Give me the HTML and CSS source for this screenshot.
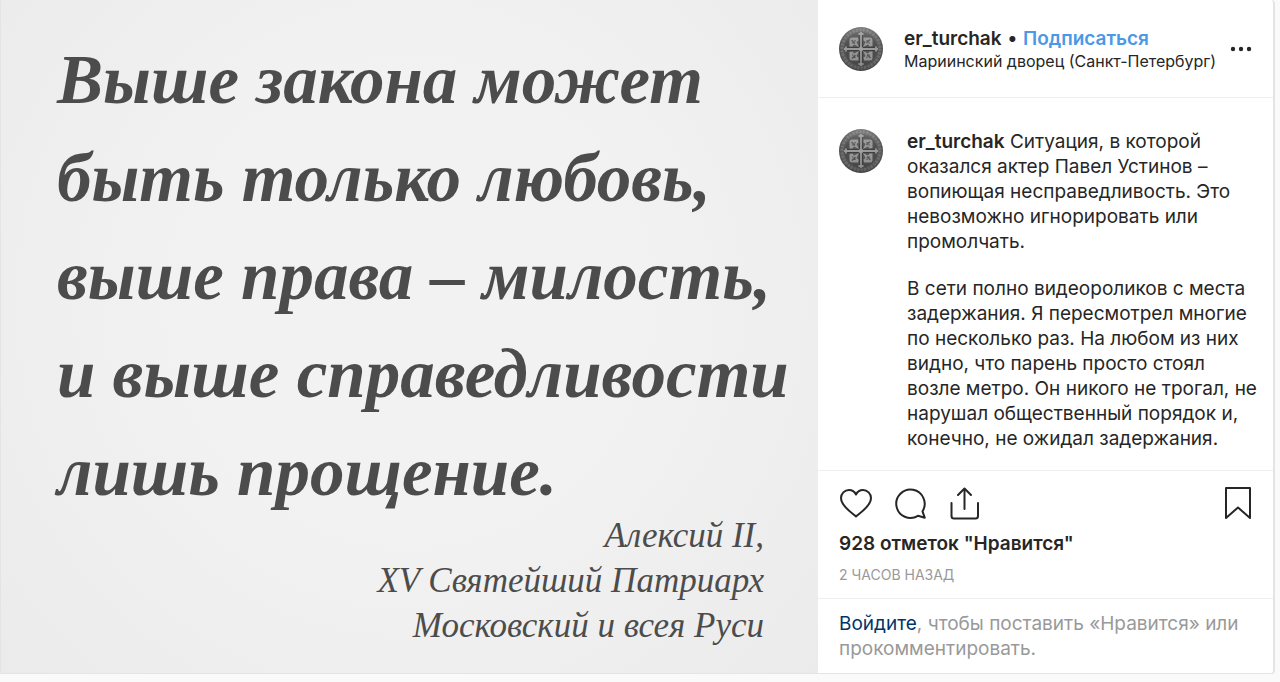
FILE: index.html
```html
<!DOCTYPE html>
<html lang="ru">
<head>
<meta charset="utf-8">
<meta name="viewport" content="width=device-width, initial-scale=1">
<title>er_turchak</title>
<link rel="stylesheet" href="styles.css">
</head>
<body>
<svg class="defs" aria-hidden="true">
  <defs>
    <radialGradient id="metal" cx="50%" cy="50%" r="50%">
      <stop offset="0" stop-color="#5a5a5a"/>
      <stop offset="0.7" stop-color="#4a4a4a"/>
      <stop offset="0.85" stop-color="#606060"/>
      <stop offset="1" stop-color="#4c4c4c"/>
    </radialGradient>
    <linearGradient id="sheen" x1="0" y1="0" x2="0" y2="1">
      <stop offset="0" stop-color="#fff" stop-opacity="0.26"/>
      <stop offset="0.5" stop-color="#888" stop-opacity="0"/>
      <stop offset="1" stop-color="#000" stop-opacity="0.18"/>
    </linearGradient>
    <g id="corner">
      <path d="M10.500 19.500V13q0-2.500 2.500-2.500h6l0.500 3-2 1.500 2.500 5-5-2.500-1.500 2z" fill="#989898"/>
      <path d="M12.500 13l3.500 3.500M16 13v1.500M13 16h1.500" stroke="#505050" stroke-width="1.200"/>
    </g>
    <symbol id="medal" viewBox="0 0 44 44">
      <circle cx="22" cy="22" r="22" fill="url(#metal)"/>
      <circle cx="22" cy="22" r="19" fill="none" stroke="#707070" stroke-width="3" stroke-dasharray="1.500 2 2 1.500"/>
      <use href="#corner"/>
      <use href="#corner" transform="rotate(90 22 22)"/>
      <use href="#corner" transform="rotate(180 22 22)"/>
      <use href="#corner" transform="rotate(270 22 22)"/>
      <path d="M22 6v32M6 22h32" stroke="#3e3e3e" stroke-width="4"/>
      <path d="M22 5v34M5 22h34M19.500 7h5M19.500 37h5M7 19.500v5M37 19.500v5" stroke="#9a9a9a" stroke-width="1.800"/>
      <circle cx="22" cy="22" r="2.200" fill="#a0a0a0"/>
      <circle cx="22" cy="22" r="22" fill="url(#sheen)"/>
    </symbol>
  </defs>
</svg>
<article class="post">
  <figure class="photo">
    <blockquote class="quote">Выше закона может<br>быть только любовь,<br>выше права – милость,<br>и выше справедливости<br>лишь прощение.</blockquote>
    <figcaption class="author">Алексий II,<br>XV Святейший Патриарх<br>Московский и всея Руси</figcaption>
  </figure>
  <div class="side">
    <header class="head">
      <svg class="avatar" role="img" aria-label="er_turchak"><use href="#medal"/></svg>
      <div class="who">
        <div class="name-row"><a class="user" href="#">er_turchak</a> <span>•</span> <button class="follow" type="button">Подписаться</button></div>
        <a class="place" href="#">Мариинский дворец (Санкт-Петербург)</a>
      </div>
      <button class="icon more" type="button" aria-label="Ещё">
        <svg width="22" height="6" viewBox="0 0 22 6" fill="#262626"><circle cx="3" cy="3" r="2.200"/><circle cx="11" cy="3" r="2.200"/><circle cx="19" cy="3" r="2.200"/></svg>
      </button>
    </header>
    <section class="comment">
      <svg class="avatar" role="img" aria-label="er_turchak"><use href="#medal"/></svg>
      <div class="text">
        <p><a class="user" href="#">er_turchak</a> Ситуация, в которой<br>оказался актер Павел Устинов –<br>вопиющая несправедливость. Это<br>невозможно игнорировать или<br>промолчать.</p>
        <p>В сети полно видеороликов с места<br>задержания. Я пересмотрел многие<br>по несколько раз. На любом из них<br>видно, что парень просто стоял<br>возле метро. Он никого не трогал, не<br>нарушал общественный порядок и,<br>конечно, не ожидал задержания.</p>
      </div>
    </section>
    <section class="actions">
      <div class="buttons">
        <button class="icon" type="button" aria-label="Нравится">
          <svg width="34" height="34" viewBox="0 0 34 34"><path d="M17 30.500C14 27.500 2 20.500 2 12A8 8 0 0 1 10 4C13 4 15.500 5.500 17 8.500C18.500 5.500 21 4 24 4A8 8 0 0 1 32 12C32 20.500 20 27.500 17 30.500Z"/></svg>
        </button>
        <button class="icon" type="button" aria-label="Комментировать">
          <svg width="34" height="34" viewBox="0 0 34 34"><path d="M29.500 25.300A14.200 14.200 0 1 0 25 29.800L31.800 31.800Z"/></svg>
        </button>
        <button class="icon" type="button" aria-label="Поделиться">
          <svg width="34" height="34" viewBox="0 0 34 34"><path d="M17.500 23V2.500M11 9L17.500 2.500L24 9M4.500 17V30Q4.500 32.500 7 32.500H28.500Q31 32.500 31 30V17"/></svg>
        </button>
        <button class="icon save" type="button" aria-label="Сохранить">
          <svg width="28" height="34" viewBox="0 0 28 34"><path d="M2 2H26V32L14 21.500L2 32Z"/></svg>
        </button>
      </div>
      <a class="likes" href="#">928 отметок "Нравится"</a>
      <time class="time">2 ЧАСОВ НАЗАД</time>
    </section>
    <footer class="login"><a href="#">Войдите</a>, чтобы поставить «Нравится» или<br>прокомментировать.</footer>
  </div>
</article>
</body>
</html>
```
FILE: styles.css
```css
* {
  box-sizing: border-box;
}

body {
  margin: 0;
  background: #fafafa;
  color: #262626;
  font: 19px/25px Inter, "Liberation Sans", sans-serif;
}

a {
  color: inherit;
  text-decoration: none;
}

p,
figure,
blockquote {
  margin: 0;
}

button {
  padding: 0;
  border: 0;
  background: none;
  color: inherit;
  font: inherit;
  cursor: pointer;
}

.defs {
  position: absolute;
  width: 0;
  height: 0;
}

.post {
  display: flex;
  margin-right: 5px;
  border: solid #e4e4e4;
  border-width: 0 2px 1px 1px;
  border-radius: 0 4px 4px 0;
  background: #fff;
}

.photo {
  flex: 1;
  padding: 31px 24px 25px 56px;
  background: radial-gradient(circle at 50% 45%, #f2f2f2 40%, #ebebeb 100%);
  color: #4c4c4c;
  font-family: "Monotype Corsiva", "Liberation Serif", serif;
  font-style: italic;
  white-space: nowrap;
}

.quote {
  font-size: 69px;
  font-weight: bold;
  line-height: 98px;
}

.author {
  margin-top: -8px;
  padding-right: 30px;
  font-size: 35px;
  line-height: 45px;
  text-align: right;
}

.side {
  display: flex;
  flex-direction: column;
  flex: 0 0 455px;
}

.avatar {
  flex: none;
  width: 44px;
  height: 44px;
}

.head {
  display: flex;
  align-items: center;
  height: 98px;
  padding: 0 21px;
  border-bottom: 1px solid #efefef;
}

.who {
  flex: 1;
  padding-left: 21px;
  white-space: nowrap;
}

.user,
.follow,
.likes {
  font-weight: 600;
}

.follow {
  color: #4a98e8;
}

.place {
  display: block;
  font-size: 16px;
  line-height: 21px;
}

.icon {
  display: flex;
}

.icon path {
  fill: none;
  stroke: #262626;
  stroke-width: 2;
  stroke-linecap: round;
  stroke-linejoin: round;
}

.comment {
  display: flex;
  gap: 24px;
  padding: 31px 12px 19px 21px;
  border-bottom: 1px solid #efefef;
}

.text {
  display: flex;
  flex-direction: column;
  gap: 22px;
  white-space: nowrap;
}

.actions {
  display: flex;
  flex-direction: column;
  padding: 15px 21px;
  border-bottom: 1px solid #efefef;
}

.buttons {
  display: flex;
  gap: 20px;
  margin-bottom: 11px;
}

.save {
  margin-left: auto;
}

.time {
  margin-top: 11px;
  color: #999;
  font-size: 14px;
  line-height: 16px;
}

.login {
  padding: 12px 21px;
  color: #999;
}

.login a {
  color: #003569;
}
```
